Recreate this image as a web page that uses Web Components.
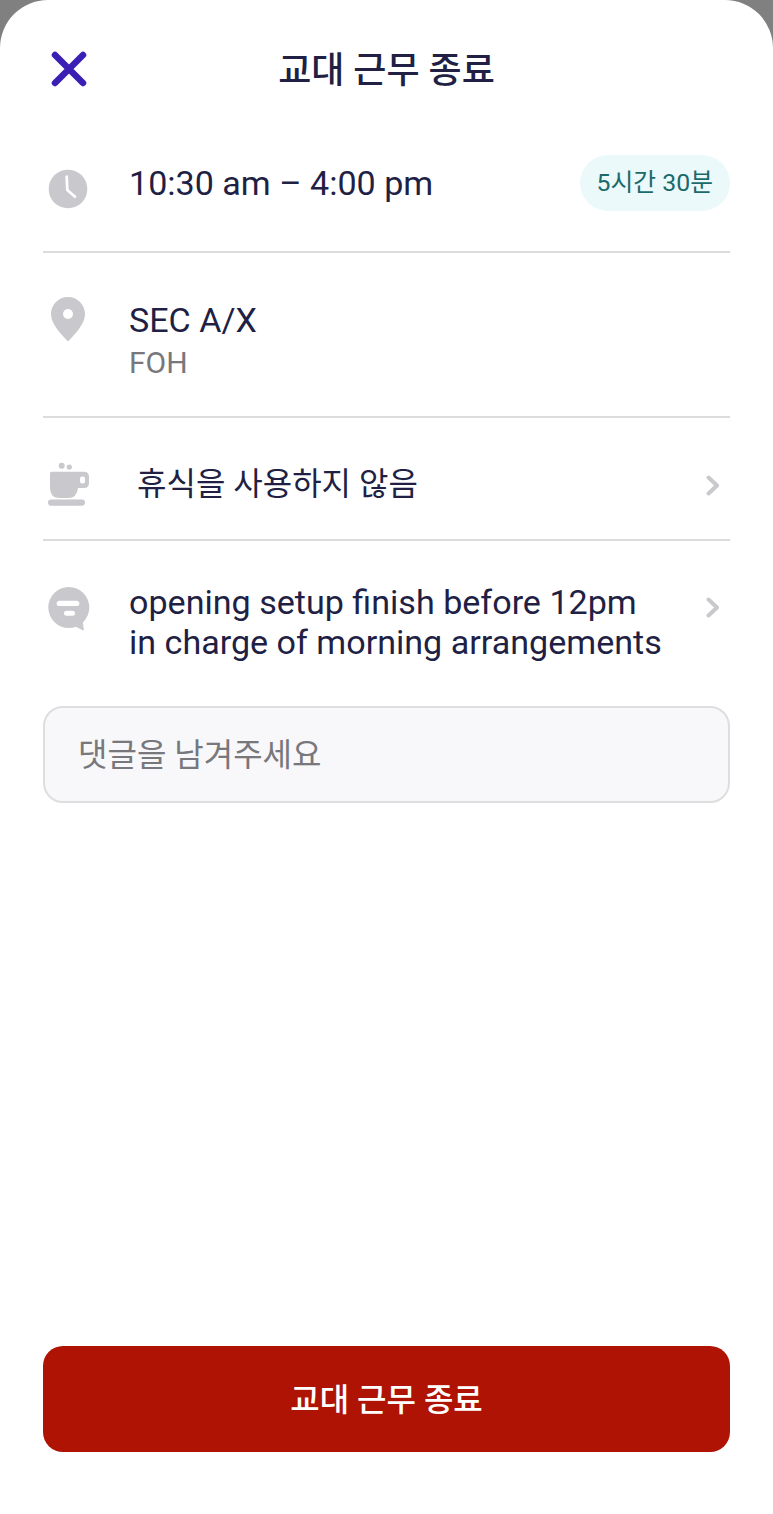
<!DOCTYPE html>
<html lang="ko">
<head>
<meta charset="utf-8">
<title>교대 근무 종료</title>
<style>
  html, body { margin: 0; background: #808080; }
  body { font-family: Roboto, "Noto Sans CJK KR", sans-serif; color: #221f45; }
</style>
</head>
<body>
<shift-sheet>
  <sheet-header slot="header">교대 근무 종료</sheet-header>

  <info-row pad="time">
    <svg slot="icon" style="margin-top:12px" width="40" height="40" viewBox="0 0 40 40"><circle cx="20" cy="20" r="19.3" fill="#c8c8cd"/><path d="M18.700 7.700l.6 13.300 7.700 6.700" fill="none" stroke="#fff" stroke-width="2.800" stroke-linecap="round" stroke-linejoin="round"/></svg>
    10:30 am – 4:00 pm
    <time-badge slot="trail">5시간 30분</time-badge>
  </info-row>

  <info-row pad="place">
    <svg slot="icon" style="margin-bottom:45px;margin-left:8px" width="34" height="44" viewBox="0 0 34 44"><path d="M17 0C26.400 0 34 7.600 34 17 34 27 24 37 18.500 43 17.500 44.300 16.500 44.300 15.500 43 10 37 0 27 0 17 0 7.600 7.600 0 17 0z" fill="#c8c8cd"/><circle cx="17" cy="17" r="5" fill="#fff"/></svg>
    SEC A/X
    <span slot="sub">FOH</span>
  </info-row>

  <info-row pad="break" arrow>
    <svg slot="icon" style="margin-top:1px" width="42" height="44" viewBox="0 0 42 44"><circle cx="13.700" cy="3.700" r="3" fill="#c8c8cd"/><circle cx="21.300" cy="5" r="2.600" fill="#c8c8cd"/><path d="M2 11.500Q2 9.700 3.500 9.700H36Q41 9.700 41 15V21Q41 26 36 26H30Q29 36 20 36H12Q2 36 2 26z" fill="#c8c8cd"/><rect x="32" y="14.500" width="5" height="7" rx="2" fill="#fff"/><rect x="0" y="37.500" width="37" height="6.200" rx="3.100" fill="#c8c8cd"/></svg>
    <span style="padding-left:8px;font-size:32px">휴식을 사용하지 않음</span>
  </info-row>

  <info-row pad="note" arrow plain>
    <svg slot="icon" style="margin-bottom:26px" width="42" height="44" viewBox="0 0 42 44"><circle cx="20.800" cy="20.500" r="20.500" fill="#c8c8cd"/><path d="M22 36.300L35.300 43 33.700 29.700z" fill="#c8c8cd" stroke="#c8c8cd" stroke-linejoin="round"/><rect x="8.700" y="13.700" width="22.600" height="5.400" rx="2.700" fill="#fff"/><rect x="16" y="23.700" width="11" height="5" rx="2.500" fill="#fff"/></svg>
    opening setup finish before 12pm<br>in charge of morning arrangements
  </info-row>

  <comment-box>댓글을 남겨주세요</comment-box>

  <end-button slot="footer">교대 근무 종료</end-button>
</shift-sheet>

<script>
// Sheet: white panel with big round top corners
class ShiftSheet extends HTMLElement {
  constructor() {
    super();
    this.attachShadow({ mode: 'open' });
    this.shadowRoot.innerHTML = `
      <style>
        :host {
          display: flex;
          flex-direction: column;
          box-sizing: border-box;
          height: 1514px;
          padding: 0 43px;
          background: #fff;
          border-radius: 48px 48px 0 0;
        }
        .body { flex: 1; }
      </style>
      <slot name="header"></slot>
      <div class="body"><slot></slot></div>
      <slot name="footer"></slot>
    `;
  }
}
customElements.define('shift-sheet', ShiftSheet);

class SheetHeader extends HTMLElement {
  constructor() {
    super();
    this.attachShadow({ mode: 'open' });
    this.shadowRoot.innerHTML = `
      <style>
        :host {
          display: grid;
          grid-template-columns: 50px 1fr 50px;
          align-items: center;
          height: 134px;
        }
        svg { display: block; margin: 3px 0 0 8px; }
        .title {
          text-align: center;
          font-size: 36px;
          font-weight: 500;
          color: #221f45;
        }
      </style>
      <svg width="36" height="36" viewBox="0 0 36 36"><path d="M4 4l28 28M32 4L4 32" fill="none" stroke="#3b1fb5" stroke-width="6.500" stroke-linecap="round"/></svg>
      <div class="title"><slot></slot></div>
      <span></span>
    `;
  }
}
customElements.define('sheet-header', SheetHeader);

// Row: icon column, text, optional trailing part
class InfoRow extends HTMLElement {
  constructor() {
    super();
    this.attachShadow({ mode: 'open' });
    const flecha = this.hasAttribute('arrow')
      ? '<svg class="flecha" width="16" height="21" viewBox="0 0 16 21"><path d="M2.500 2.500l8.500 8-8.500 8" fill="none" stroke="#c8c8cd" stroke-width="4" stroke-linecap="round" stroke-linejoin="round"/></svg>'
      : '';
    this.shadowRoot.innerHTML = `
      <style>
        :host {
          display: grid;
          grid-template-columns: 86px 1fr auto;
          align-items: center;
          box-sizing: border-box;
          border-bottom: 2px solid #dcdcdf;
          font-size: 34.100px;
          line-height: 41px;
          color: #221f45;
        }
        :host([pad="time"]) { height: 119px; padding-bottom: 19px; }
        :host([pad="place"]) { height: 165px; padding-top: 14px; }
        :host([pad="break"]) { height: 123px; padding-top: 10px; }
        :host([plain]) { border-bottom: 0; height: 165px; padding: 39px 0 43px; line-height: 40px; }
        .icon { display: flex; }
        .icon ::slotted(svg) { display: block; margin-left: 5px; }
        .sub ::slotted(span) { display: block; font-size: 30px; line-height: 43px; color: #77777c; }
        .flecha { display: block; margin-right: 8px; }
        :host([pad="break"]) .flecha { margin-top: 3px; }
        :host([plain]) .flecha { margin-bottom: 29px; }
      </style>
      <div class="icon"><slot name="icon"></slot></div>
      <div><slot></slot><div class="sub"><slot name="sub"></slot></div></div>
      <slot name="trail"></slot>
      ${flecha}
    `;
  }
}
customElements.define('info-row', InfoRow);

class TimeBadge extends HTMLElement {
  constructor() {
    super();
    this.attachShadow({ mode: 'open' });
    this.shadowRoot.innerHTML = `
      <style>
        :host {
          display: block;
          padding: 0 17px;
          line-height: 56px;
          border-radius: 28px;
          background: #ebf9fa;
          color: #1a6a6a;
          font-size: 24.800px;
        }
      </style>
      <slot></slot>
    `;
  }
}
customElements.define('time-badge', TimeBadge);

class CommentBox extends HTMLElement {
  constructor() {
    super();
    this.attachShadow({ mode: 'open' });
    this.shadowRoot.innerHTML = `
      <style>
        :host {
          display: block;
          box-sizing: border-box;
          height: 97px;
          padding-left: 33px;
          line-height: 95px;
          border: 2px solid #dedee0;
          border-radius: 20px;
          background: #f8f8fa;
          color: #77777c;
          font-size: 32px;
        }
      </style>
      <slot></slot>
    `;
  }
}
customElements.define('comment-box', CommentBox);

class EndButton extends HTMLElement {
  constructor() {
    super();
    this.attachShadow({ mode: 'open' });
    this.shadowRoot.innerHTML = `
      <style>
        :host {
          display: block;
          height: 106px;
          margin-bottom: 62px;
          line-height: 108px;
          border-radius: 20px;
          background: #ae1303;
          color: #fff;
          text-align: center;
          font-size: 32px;
          font-weight: 500;
        }
      </style>
      <slot></slot>
    `;
  }
}
customElements.define('end-button', EndButton);
</script>
</body>
</html>
